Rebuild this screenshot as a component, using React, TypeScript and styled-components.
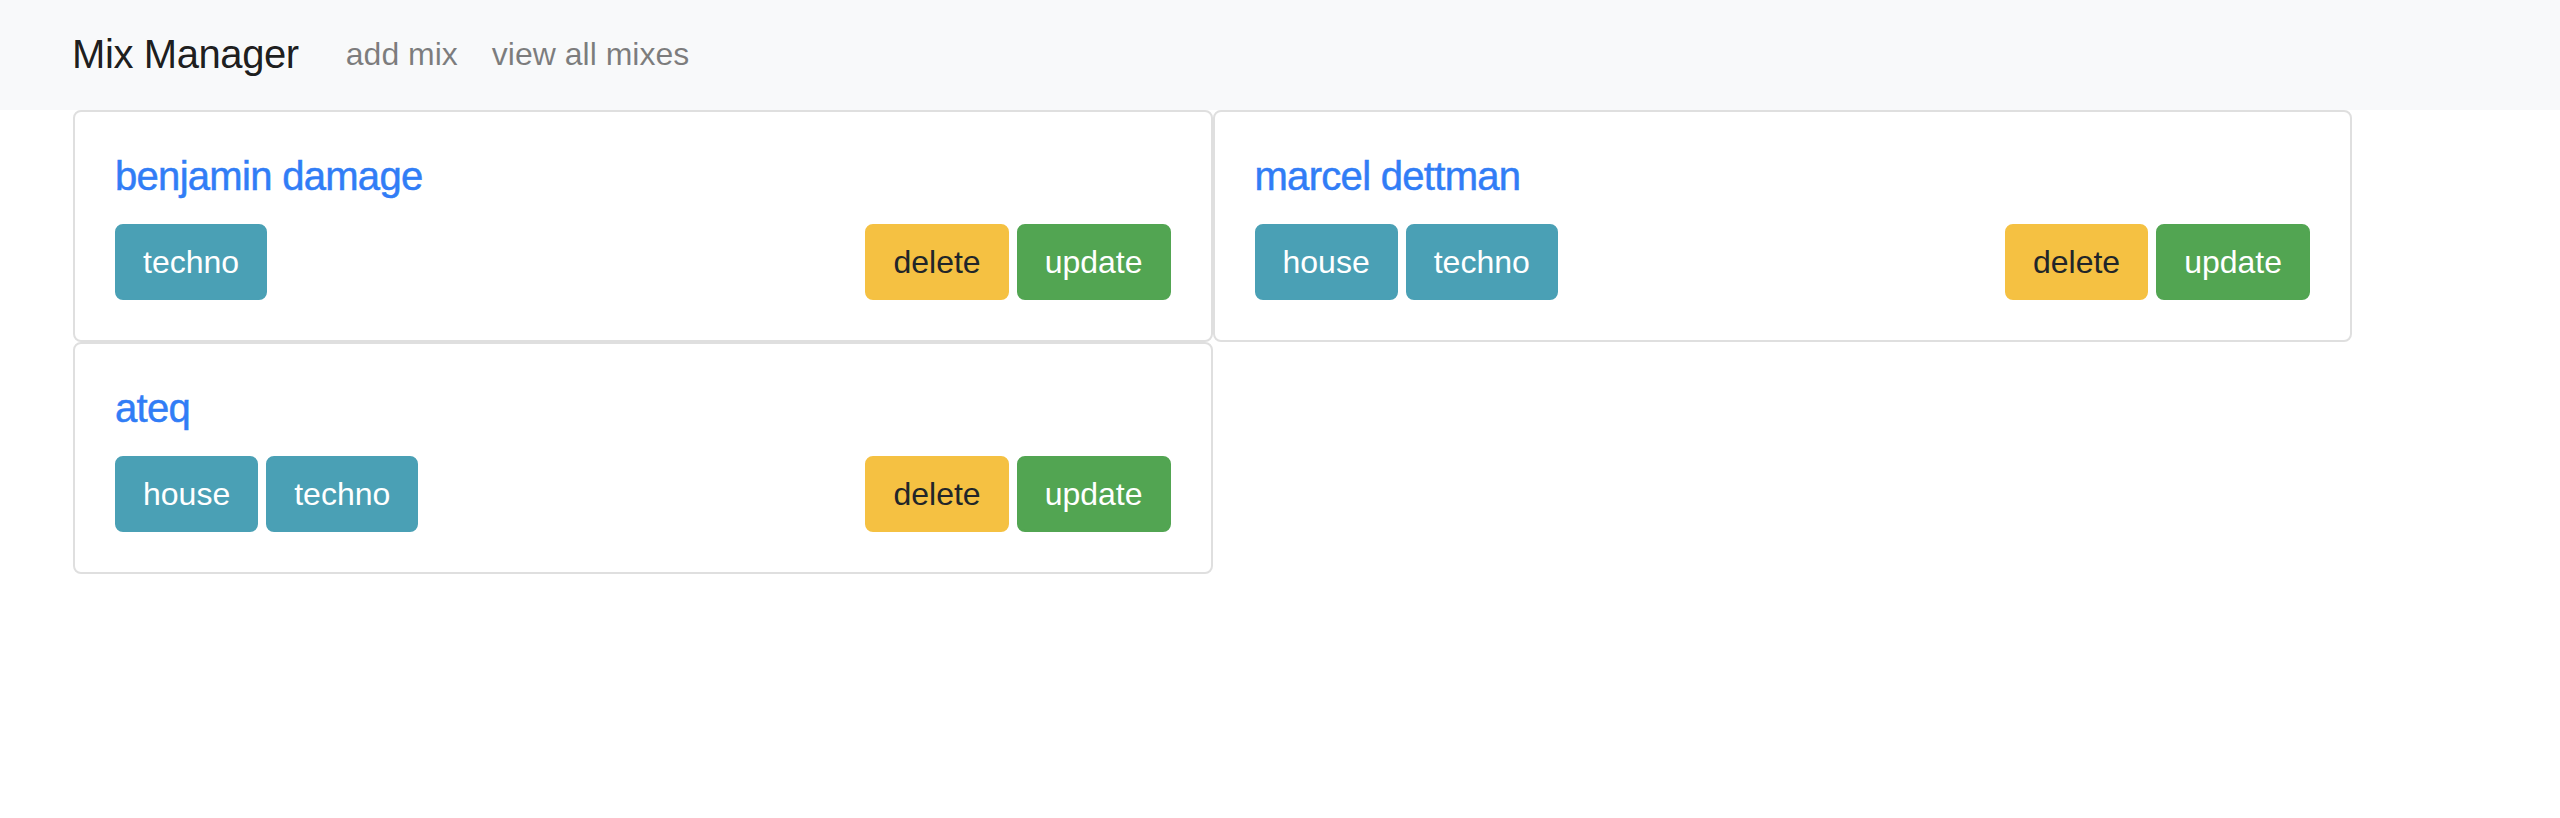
import React from "react";
import styled, { createGlobalStyle } from "styled-components";

const GlobalStyle = createGlobalStyle`
  html, body {
    margin: 0;
    padding: 0;
    background: #ffffff;
    font-family: "Liberation Sans", Arial, sans-serif;
    color: #212529;
  }
  * { box-sizing: border-box; }
`;

const Navbar = styled.nav`
  display: flex;
  align-items: center;
  height: 110px;
  padding: 0 0 2px 72px;
  background: #f8f9fa;
`;

const Brand = styled.a`
  font-size: 40px;
  line-height: 60px;
  letter-spacing: -0.4px;
  color: rgba(0, 0, 0, 0.9);
  text-decoration: none;
  margin-right: 30px;
  white-space: nowrap;
`;

const NavLink = styled.a`
  font-size: 32px;
  line-height: 48px;
  padding: 0 17px;
  color: rgba(0, 0, 0, 0.5);
  text-decoration: none;
  white-space: nowrap;
`;

const CardGrid = styled.main`
  display: flex;
  flex-wrap: wrap;
  margin-left: 73px;
  width: 2279px;
`;

const Card = styled.section`
  flex: 0 0 50%;
  border: 2px solid #dfdfdf;
  border-radius: 8px;
  background: #ffffff;
  padding: 40px;
`;

const Title = styled.a`
  display: block;
  font-size: 40px;
  line-height: 48px;
  font-weight: 500;
  letter-spacing: -0.7px;
  color: #317df6;
  -webkit-text-stroke: 0.5px #317df6;
  text-decoration: none;
  margin-bottom: 24px;
`;

const Row = styled.div`
  display: flex;
  justify-content: space-between;
  align-items: center;
`;

const Group = styled.div`
  display: flex;
  gap: 8px;
`;

type Variant = "info" | "warning" | "success";

const palette: Record<Variant, { bg: string; fg: string }> = {
  info: { bg: "#4aa0b5", fg: "#ffffff" },
  warning: { bg: "#f5c142", fg: "#212529" },
  success: { bg: "#52a552", fg: "#ffffff" },
};

const Button = styled.button<{ $variant: Variant }>`
  font-family: "Liberation Sans", Arial, sans-serif;
  font-size: 32px;
  line-height: 48px;
  padding: 12px 26px;
  border: 2px solid ${(p) => palette[p.$variant].bg};
  border-radius: 8px;
  background: ${(p) => palette[p.$variant].bg};
  color: ${(p) => palette[p.$variant].fg};
  cursor: pointer;
`;

type Mix = { name: string; genres: string[] };

const mixes: Mix[] = [
  { name: "benjamin damage", genres: ["techno"] },
  { name: "marcel dettman", genres: ["house", "techno"] },
  { name: "ateq", genres: ["house", "techno"] },
];

export default function App() {
  return (
    <>
      <GlobalStyle />
      <Navbar>
        <Brand href="#">Mix Manager</Brand>
        <NavLink href="#">add mix</NavLink>
        <NavLink href="#">view all mixes</NavLink>
      </Navbar>
      <CardGrid>
        {mixes.map((m) => (
          <Card key={m.name}>
            <Title href="#">{m.name}</Title>
            <Row>
              <Group>
                {m.genres.map((g) => (
                  <Button key={g} $variant="info">
                    {g}
                  </Button>
                ))}
              </Group>
              <Group>
                <Button $variant="warning">delete</Button>
                <Button $variant="success">update</Button>
              </Group>
            </Row>
          </Card>
        ))}
      </CardGrid>
    </>
  );
}
